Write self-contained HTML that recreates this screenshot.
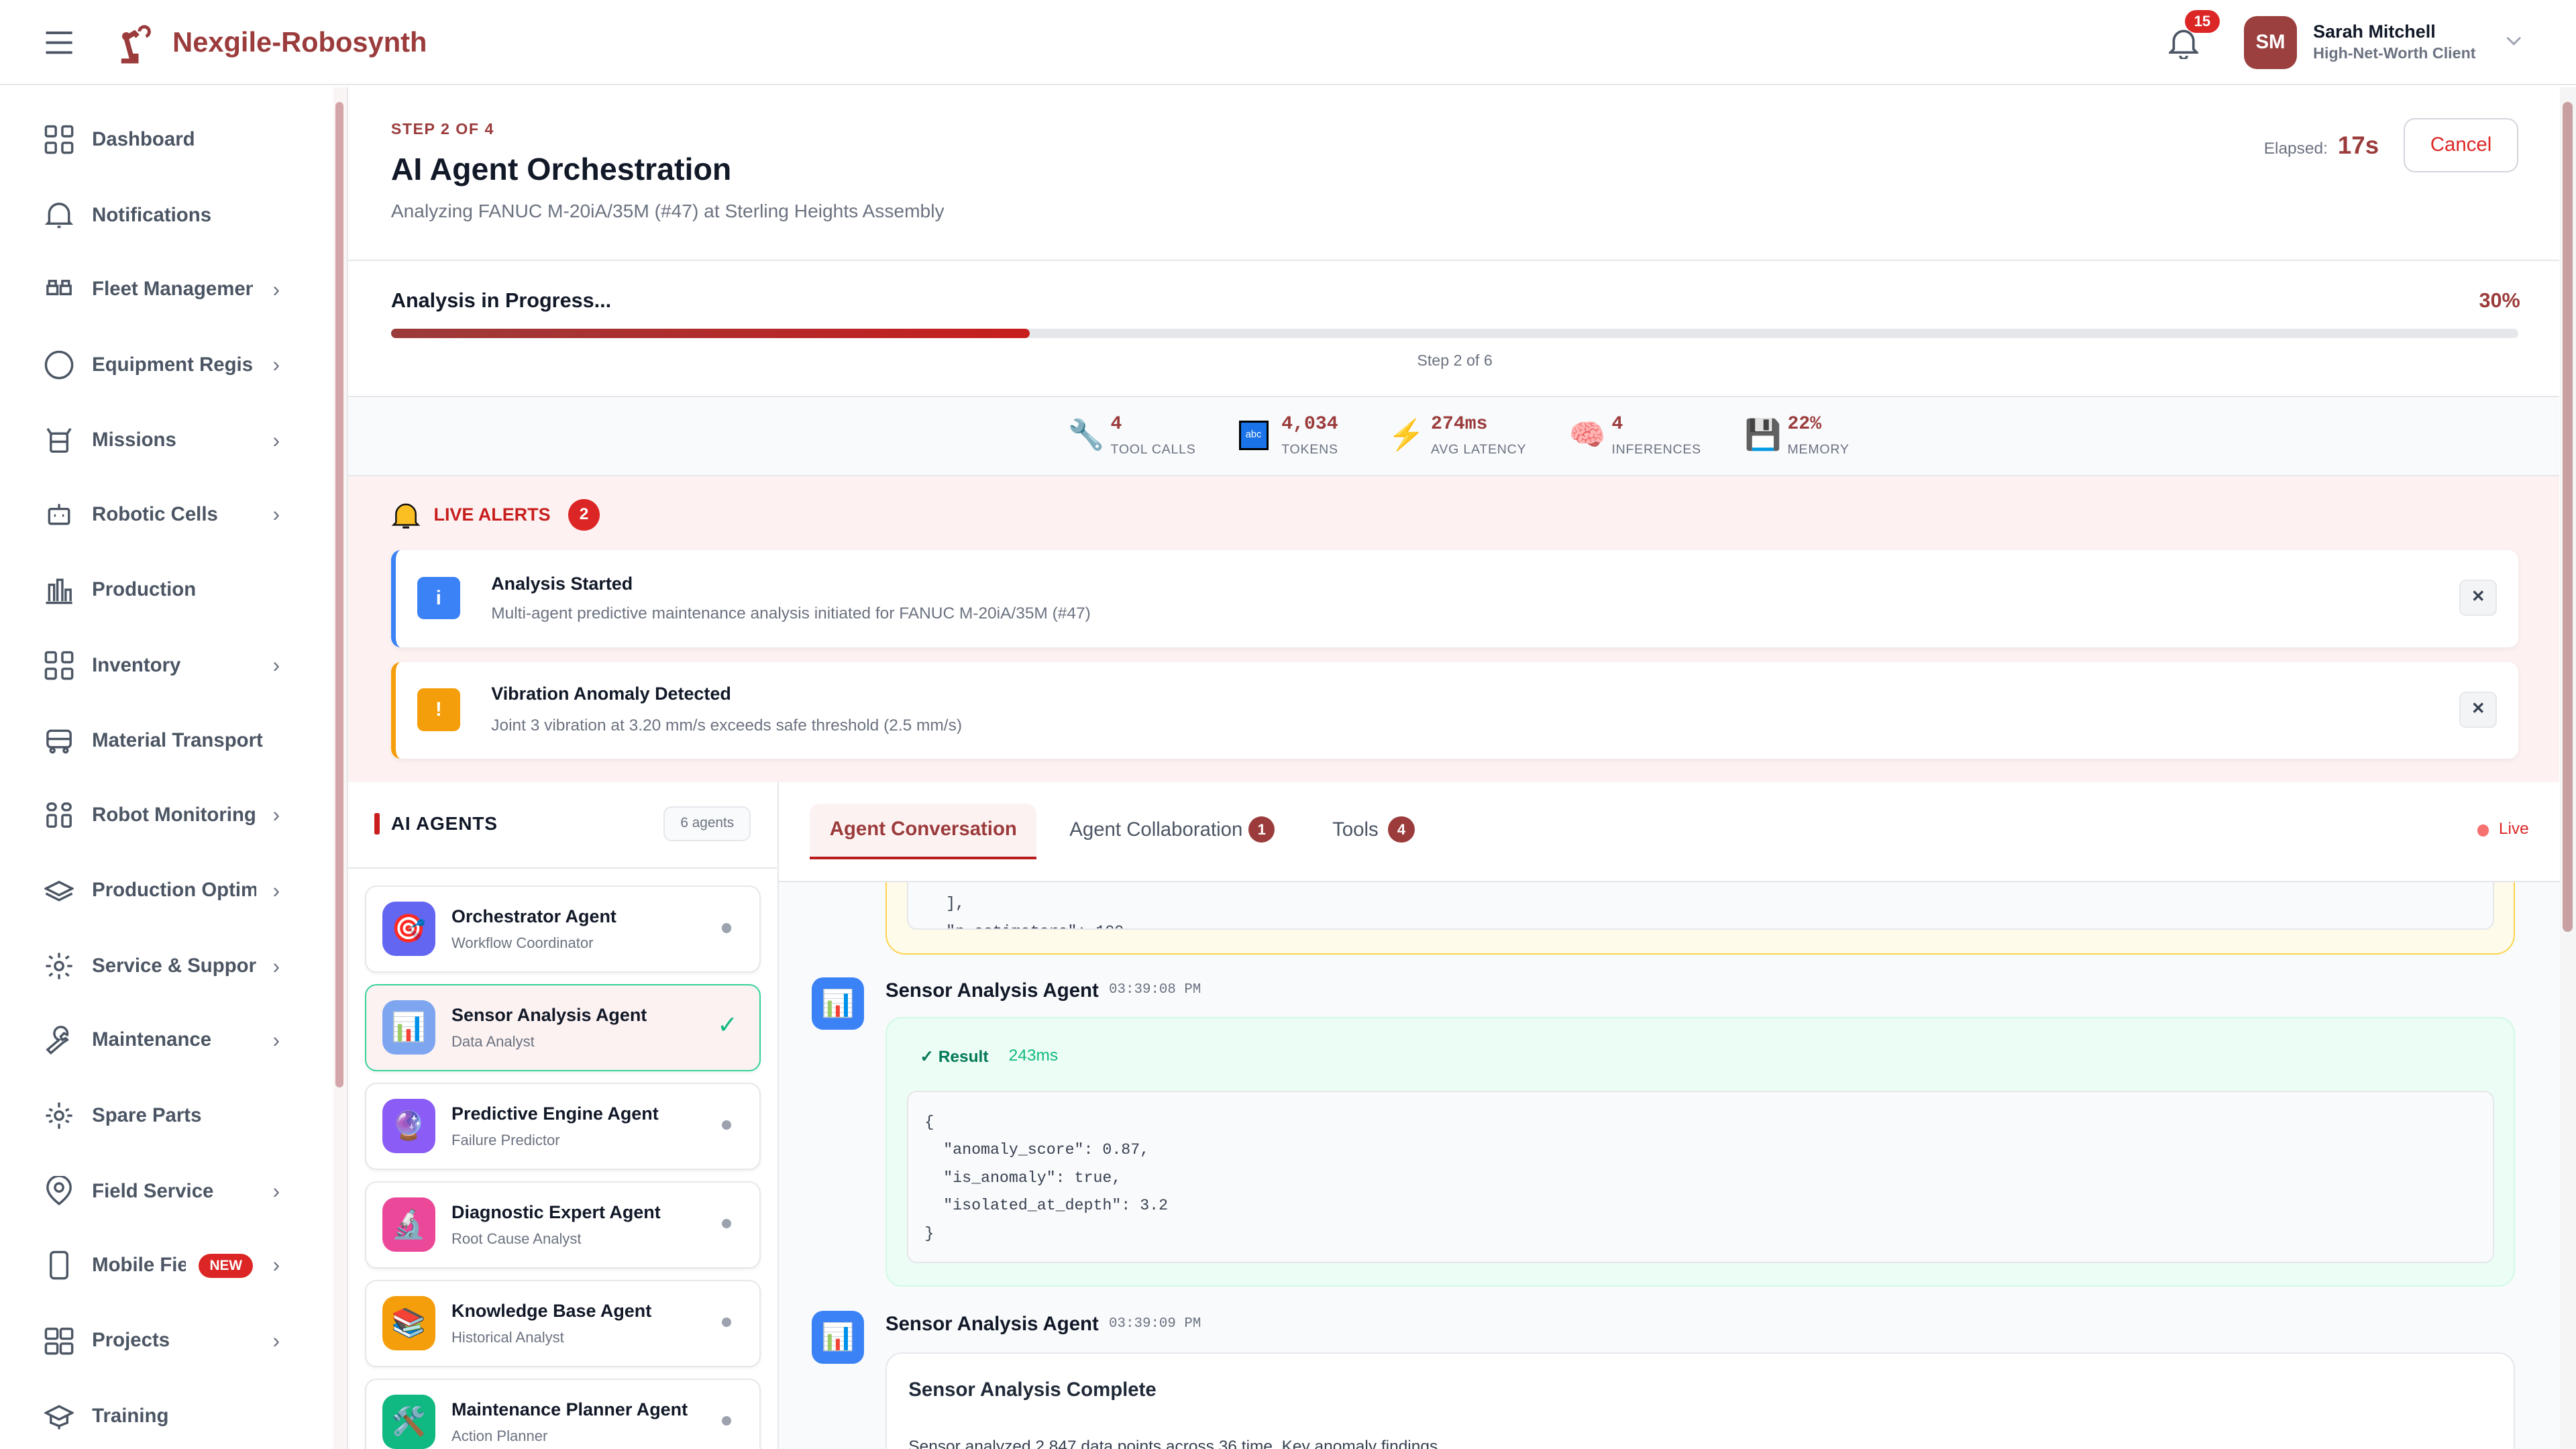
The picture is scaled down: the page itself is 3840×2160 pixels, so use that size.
<!DOCTYPE html>
<html><head><meta charset="utf-8"><style>
*{box-sizing:border-box;margin:0;padding:0}
html,body{width:3840px;height:2160px;overflow:hidden;background:#fff}
#r{zoom:2.44898;width:1568px;height:882px;position:relative;font-family:"Liberation Sans",sans-serif;color:#111827;overflow:hidden}
.a{position:absolute}
.mono{font-family:"Liberation Mono",monospace}
.nav{position:absolute;left:0;width:200px;height:30px;display:flex;align-items:center;font-size:12px;font-weight:700;color:#4b5563}
.nav svg{position:absolute;left:27px;width:18px;height:18px;fill:none;stroke:#4b5563;stroke-width:1.4}
.nav span{position:absolute;left:56px;white-space:nowrap;overflow:hidden;max-width:108px}
.nav i{position:absolute;left:166px;font-style:normal;font-weight:400;color:#6b7280;font-size:13px}
.card{position:absolute;left:222px;width:241px;height:53px;background:#fff;border:1px solid #e5e7eb;border-radius:7px;box-shadow:0 1px 2px rgba(0,0,0,.05)}
.card .ic{position:absolute;left:10px;top:9px;width:32px;height:33px;border-radius:8px;display:flex;align-items:center;justify-content:center;font-size:17px}
.card b{position:absolute;left:52px;top:12px;font-size:11px;color:#111827}
.card s{position:absolute;left:52px;top:29px;font-size:9px;color:#6b7280;text-decoration:none}
.card u{position:absolute;right:17px;top:22px;width:6px;height:6px;border-radius:50%;background:#9ca3af}
.met{position:absolute;top:252px}
.met b{position:absolute;left:26px;top:0;font-family:"Liberation Mono",monospace;font-size:11.5px;color:#9b3b3b;white-space:nowrap}
.met s{position:absolute;left:26px;top:17px;font-size:8px;color:#6b7280;text-decoration:none;letter-spacing:.3px;white-space:nowrap}
.met .e{position:absolute;left:0;top:3px;font-size:18px;line-height:20px}
</style></head><body><div id="r">

<div class="a" style="left:0;top:0;width:1568px;height:52px;background:#fff;border-bottom:1px solid #e5e7eb"></div>
<svg class="a" style="left:27px;top:18px" width="18" height="16" viewBox="0 0 18 16"><path d="M1 2h16M1 8h16M1 14h16" stroke="#4b5563" stroke-width="1.6"/></svg>
<svg class="a" style="left:70px;top:15px" width="24" height="24" viewBox="0 0 24 24"><path d="M4 22h9v-3h-3L7 8l5-3 2 2" stroke="#9b3b3b" stroke-width="3" fill="none"/><path d="M15 4a3 3 0 1 1 4 3" stroke="#9b3b3b" stroke-width="2" fill="none"/><circle cx="7" cy="7" r="2.5" fill="#9b3b3b"/></svg>
<div class="a" style="left:105px;top:16px;font-size:17px;font-weight:700;color:#9b3b3b">Nexgile-Robosynth</div>
<svg class="a" style="left:1320px;top:16px" width="18" height="20" viewBox="0 0 18 20"><path d="M3 14V9a6 6 0 0 1 12 0v5l2 2H1z M7 18a2 2 0 0 0 4 0" stroke="#4b5563" stroke-width="1.5" fill="none"/></svg>
<div class="a" style="left:1330px;top:6px;width:21px;height:14px;border-radius:7px;background:#dc2626;color:#fff;font-size:9px;font-weight:700;text-align:center;line-height:14px">15</div>
<div class="a" style="left:1366px;top:10px;width:32px;height:32px;border-radius:8px;background:#9b3f3f;color:#fff;font-size:12px;font-weight:700;text-align:center;line-height:32px">SM</div>
<div class="a" style="left:1408px;top:13px;font-size:11px;font-weight:700">Sarah Mitchell</div>
<div class="a" style="left:1408px;top:27px;font-size:9.5px;font-weight:700;color:#6b7280">High-Net-Worth Client</div>
<svg class="a" style="left:1525px;top:21px" width="10" height="8" viewBox="0 0 10 8"><path d="M1 2l4 4 4-4" stroke="#9ca3af" stroke-width="1.2" fill="none"/></svg>

<div class="a" style="left:203px;top:53px;width:8px;height:829px;background:#faf5f5"></div>
<div class="a" style="left:204px;top:62px;width:5px;height:600px;border-radius:3px;background:#d4a5a8"></div>
<div class="a" style="left:211px;top:53px;width:1px;height:829px;background:#e5e7eb"></div>

<div class="nav" style="top:70px"><svg viewBox="0 0 18 18"><rect x="1" y="1" width="6" height="6" rx="1"/><rect x="11" y="1" width="6" height="6" rx="1"/><rect x="1" y="11" width="6" height="6" rx="1"/><rect x="11" y="11" width="6" height="6" rx="1"/></svg><span>Dashboard</span></div>
<div class="nav" style="top:116px"><svg viewBox="0 0 18 18"><path d="M3 13V8a6 6 0 0 1 12 0v5l1 1H2z M8 16h2"/></svg><span>Notifications</span></div>
<div class="nav" style="top:161px"><svg viewBox="0 0 18 18"><path d="M2 7h6v5H2zM10 7h6v5h-6zM3 7V4h4v3M11 7V4h4v3"/></svg><span style="max-width:98px">Fleet Management</span><i>›</i></div>
<div class="nav" style="top:207px"><svg viewBox="0 0 18 18"><circle cx="9" cy="9" r="8"/></svg><span style="max-width:98px">Equipment Registry</span><i>›</i></div>
<div class="nav" style="top:253px"><svg viewBox="0 0 18 18"><rect x="4" y="5" width="10" height="11" rx="1"/><path d="M2 2l2 3M16 2l-2 3M4 10h10"/></svg><span>Missions</span><i>›</i></div>
<div class="nav" style="top:298px"><svg viewBox="0 0 18 18"><rect x="3" y="6" width="12" height="9" rx="1"/><path d="M9 3v3M6 10h1M11 10h1"/></svg><span>Robotic Cells</span><i>›</i></div>
<div class="nav" style="top:344px"><svg viewBox="0 0 18 18"><path d="M1 17h16M3 16V6h3v10M8 16V3h3v13M13 16V9h3v7"/></svg><span>Production</span></div>
<div class="nav" style="top:390px"><svg viewBox="0 0 18 18"><rect x="1" y="1" width="6" height="6" rx="1"/><rect x="11" y="1" width="6" height="6" rx="1"/><rect x="1" y="11" width="6" height="6" rx="1"/><rect x="11" y="11" width="6" height="6" rx="1"/></svg><span>Inventory</span><i>›</i></div>
<div class="nav" style="top:436px"><svg viewBox="0 0 18 18"><rect x="2" y="3" width="14" height="10" rx="2"/><path d="M2 8h14"/><circle cx="5" cy="15" r="1.2"/><circle cx="13" cy="15" r="1.2"/></svg><span style="max-width:120px">Material Transport</span></div>
<div class="nav" style="top:481px"><svg viewBox="0 0 18 18"><rect x="2" y="2" width="5" height="4" rx="2"/><rect x="11" y="2" width="5" height="4" rx="2"/><rect x="2" y="9" width="5" height="7" rx="1"/><rect x="11" y="9" width="5" height="7" rx="1"/></svg><span>Robot Monitoring</span><i>›</i></div>
<div class="nav" style="top:527px"><svg viewBox="0 0 18 18"><path d="M1 8l8-4 8 4-8 4zM1 11l8 4 8-4"/></svg><span style="max-width:100px">Production Optimization</span><i>›</i></div>
<div class="nav" style="top:573px"><svg viewBox="0 0 18 18"><circle cx="9" cy="9" r="2.5"/><path d="M9 1v3M9 14v3M1 9h3M14 9h3M3 3l2 1.5M15 3l-2 1.5M3 15l2-1.5M15 15l-2-1.5"/></svg><span style="max-width:100px">Service &amp; Support</span><i>›</i></div>
<div class="nav" style="top:618px"><svg viewBox="0 0 18 18"><path d="M2 15l7-6a4 4 0 1 1 5-3l-2-1-2 2 1 2 2-1 1 1-3 2-7 6z"/></svg><span>Maintenance</span><i>›</i></div>
<div class="nav" style="top:664px"><svg viewBox="0 0 18 18"><circle cx="9" cy="9" r="2.5"/><path d="M9 1v3M9 14v3M1 9h3M14 9h3M3 5l2 1M15 5l-2 1M3 13l2-1M15 13l-2-1"/></svg><span>Spare Parts</span></div>
<div class="nav" style="top:710px"><svg viewBox="0 0 18 18"><path d="M9 17C4 13 2 10 2 7a7 7 0 0 1 14 0c0 3-2 6-7 10z"/><circle cx="9" cy="7" r="2.5"/></svg><span>Field Service</span><i>›</i></div>
<div class="nav" style="top:755px"><svg viewBox="0 0 18 18"><rect x="4" y="1" width="10" height="16" rx="2"/><path d="M9 14h0"/></svg><span style="max-width:57px">Mobile Field</span><b style="position:absolute;left:121px;top:8px;width:33px;height:15px;border-radius:8px;background:#dc2626;color:#fff;font-size:8.5px;text-align:center;line-height:15px">NEW</b><i>›</i></div>
<div class="nav" style="top:801px"><svg viewBox="0 0 18 18"><rect x="1" y="2" width="7" height="6" rx="1"/><rect x="10" y="2" width="7" height="6" rx="1"/><rect x="1" y="11" width="7" height="6" rx="1"/><rect x="10" y="11" width="7" height="6" rx="1"/></svg><span>Projects</span><i>›</i></div>
<div class="nav" style="top:847px"><svg viewBox="0 0 18 18"><path d="M1 7l8-4 8 4-8 4zM4 9v4l5 2 5-2V9M9 15v2"/></svg><span>Training</span></div>

<div class="a" style="left:1558px;top:53px;width:10px;height:829px;background:#f5f5f5"></div>
<div class="a" style="left:1560px;top:62px;width:6px;height:505px;border-radius:3px;background:#c9a0a2"></div>

<div class="a" style="left:238px;top:73px;font-size:9.5px;font-weight:700;color:#9b3b3b;letter-spacing:.6px">STEP 2 OF 4</div>
<div class="a" style="left:238px;top:92px;font-size:19px;font-weight:700">AI Agent Orchestration</div>
<div class="a" style="left:238px;top:122px;font-size:11.5px;color:#6b7280">Analyzing FANUC M-20iA/35M (#47) at Sterling Heights Assembly</div>
<div class="a" style="left:1378px;top:85px;font-size:10px;color:#6b7280">Elapsed:</div>
<div class="a" style="left:1423px;top:80px;font-size:15px;font-weight:700;color:#9b3b3b">17s</div>
<div class="a" style="left:1463px;top:72px;width:70px;height:33px;border:1px solid #d1d5db;border-radius:7px;color:#dc2626;font-size:12px;text-align:center;line-height:31px">Cancel</div>
<div class="a" style="left:212px;top:158px;width:1346px;height:1px;background:#e5e7eb"></div>

<div class="a" style="left:238px;top:176px;font-size:12.5px;font-weight:700">Analysis in Progress...</div>
<div class="a" style="left:1509px;top:176px;font-size:12.5px;font-weight:700;color:#9b3b3b">30%</div>
<div class="a" style="left:238px;top:200px;width:1295px;height:6px;border-radius:3px;background:#e5e7eb"></div>
<div class="a" style="left:238px;top:200px;width:389px;height:6px;border-radius:3px;background:linear-gradient(90deg,#9b3b3b,#c81e1e)"></div>
<div class="a" style="left:238px;top:214px;width:1295px;text-align:center;font-size:9.5px;color:#6b7280">Step 2 of 6</div>

<div class="a" style="left:212px;top:241px;width:1346px;height:49px;background:#f8fafc;border-top:1px solid #e5e7eb;border-bottom:1px solid #e5e7eb"></div>
<div class="met" style="left:650px"><span class="e">🔧</span><b>4</b><s>TOOL CALLS</s></div>
<div class="met" style="left:754px"><span class="e" style="top:4px;width:18px;height:18px;background:#1a73e8;border:1.5px solid #000;color:#fff;font-size:6px;text-align:center;line-height:15px">abc</span><b>4,034</b><s>TOKENS</s></div>
<div class="met" style="left:845px"><span class="e">⚡</span><b>274ms</b><s>AVG LATENCY</s></div>
<div class="met" style="left:955px"><span class="e">🧠</span><b>4</b><s>INFERENCES</s></div>
<div class="met" style="left:1062px"><span class="e">💾</span><b>22%</b><s>MEMORY</s></div>

<div class="a" style="left:212px;top:290px;width:1346px;height:186px;background:#fdf2f1"></div>
<svg class="a" style="left:238px;top:305px" width="18" height="18" viewBox="0 0 18 18"><path d="M3 13V8a6 6 0 0 1 12 0v5l1.5 1.5h-15z" fill="#fbbf24" stroke="#111" stroke-width="1"/><path d="M7 16h4" stroke="#111" stroke-width="1.3"/></svg>
<div class="a" style="left:264px;top:307px;font-size:11px;font-weight:700;color:#c81e1e;letter-spacing:0">LIVE ALERTS</div>
<div class="a" style="left:346px;top:304px;width:19px;height:19px;border-radius:50%;background:#dc2626;color:#fff;font-size:10px;font-weight:700;text-align:center;line-height:19px">2</div>

<div class="a" style="left:238px;top:335px;width:1295px;height:59px;background:#fff;border-radius:6px;border-left:3px solid #3b82f6;box-shadow:0 1px 3px rgba(0,0,0,.06)"></div>
<div class="a" style="left:254px;top:351px;width:26px;height:26px;border-radius:4px;background:#3b82f6;color:#fff;font-size:12px;font-weight:700;text-align:center;line-height:26px">i</div>
<div class="a" style="left:299px;top:349px;font-size:11px;font-weight:700">Analysis Started</div>
<div class="a" style="left:299px;top:368px;font-size:10px;color:#6b7280">Multi-agent predictive maintenance analysis initiated for FANUC M-20iA/35M (#47)</div>
<div class="a" style="left:1497px;top:353px;width:23px;height:22px;border-radius:4px;background:#f3f4f6;border:1px solid #e5e7eb;font-size:10px;text-align:center;line-height:20px;color:#374151;font-weight:700">✕</div>

<div class="a" style="left:238px;top:403px;width:1295px;height:59px;background:#fff;border-radius:6px;border-left:3px solid #f59e0b;box-shadow:0 1px 3px rgba(0,0,0,.06)"></div>
<div class="a" style="left:254px;top:419px;width:26px;height:26px;border-radius:4px;background:#f59e0b;color:#fff;font-size:12px;font-weight:700;text-align:center;line-height:26px">!</div>
<div class="a" style="left:299px;top:416px;font-size:11px;font-weight:700">Vibration Anomaly Detected</div>
<div class="a" style="left:299px;top:436px;font-size:10px;color:#6b7280">Joint 3 vibration at 3.20 mm/s exceeds safe threshold (2.5 mm/s)</div>
<div class="a" style="left:1497px;top:421px;width:23px;height:22px;border-radius:4px;background:#f3f4f6;border:1px solid #e5e7eb;font-size:10px;text-align:center;line-height:20px;color:#374151;font-weight:700">✕</div>

<div class="a" style="left:212px;top:476px;width:262px;height:406px;background:#fff;border-right:1px solid #e5e7eb"></div>
<div class="a" style="left:228px;top:495px;width:3px;height:13px;background:#c81e1e;border-radius:1px"></div>
<div class="a" style="left:238px;top:495px;font-size:11.5px;font-weight:700;letter-spacing:.3px">AI AGENTS</div>
<div class="a" style="left:404px;top:491px;width:53px;height:21px;border:1px solid #e5e7eb;border-radius:5px;background:#f9fafb;font-size:8.5px;color:#6b7280;text-align:center;line-height:19px">6 agents</div>
<div class="a" style="left:212px;top:528px;width:261px;height:1px;background:#e5e7eb"></div>

<div class="card" style="top:539px"><div class="ic" style="background:#6366f1">🎯</div><b>Orchestrator Agent</b><s>Workflow Coordinator</s><u></u></div>
<div class="card" style="top:599px;background:#fdf2f2;border-color:#34d399"><div class="ic" style="background:#7ea6f0">📊</div><b>Sensor Analysis Agent</b><s>Data Analyst</s><span style="position:absolute;right:13px;top:15px;color:#10b981;font-size:15px">✓</span></div>
<div class="card" style="top:659px"><div class="ic" style="background:#8b5cf6">🔮</div><b>Predictive Engine Agent</b><s>Failure Predictor</s><u></u></div>
<div class="card" style="top:719px"><div class="ic" style="background:#ec4899">🔬</div><b>Diagnostic Expert Agent</b><s>Root Cause Analyst</s><u></u></div>
<div class="card" style="top:779px"><div class="ic" style="background:#f59e0b">📚</div><b>Knowledge Base Agent</b><s>Historical Analyst</s><u></u></div>
<div class="card" style="top:839px"><div class="ic" style="background:#10b981">🛠️</div><b>Maintenance Planner Agent</b><s>Action Planner</s><u></u></div>

<div class="a" style="left:474px;top:476px;width:1084px;height:61px;background:#fff;border-bottom:1px solid #e5e7eb"></div>
<div class="a" style="left:493px;top:489px;width:138px;height:34px;background:#fdf2f2;border-radius:6px 6px 0 0;border-bottom:2px solid #b91c1c;color:#9b3b3b;font-size:12px;font-weight:700;text-align:center;line-height:31px">Agent Conversation</div>
<div class="a" style="left:651px;top:498px;font-size:12px;color:#4b5563">Agent Collaboration</div>
<div class="a" style="left:760px;top:497px;width:16px;height:16px;border-radius:50%;background:#9b3b3b;color:#fff;font-size:9px;font-weight:700;text-align:center;line-height:16px">1</div>
<div class="a" style="left:811px;top:498px;font-size:12px;color:#4b5563">Tools</div>
<div class="a" style="left:845px;top:497px;width:16px;height:16px;border-radius:50%;background:#9b3b3b;color:#fff;font-size:9px;font-weight:700;text-align:center;line-height:16px">4</div>
<div class="a" style="left:1508px;top:502px;width:7px;height:7px;border-radius:50%;background:#f87171"></div>
<div class="a" style="left:1521px;top:499px;font-size:10px;color:#dc2626">Live</div>

<div class="a" style="left:474px;top:537px;width:1084px;height:345px;background:#f8fafc;overflow:hidden">
  <div class="a" style="left:65px;top:-20px;width:992px;height:64px;background:#fefbea;border:1px solid #fcd34d;border-radius:0 0 12px 12px"></div>
  <div class="a" style="left:78px;top:-10px;width:966px;height:39px;background:#f9fafb;border:1px solid #e5e7eb;border-radius:0 0 6px 6px;overflow:hidden">
    <div class="mono" style="position:absolute;left:23px;top:14px;font-size:9.5px;color:#374151;line-height:17px">],<br>"n_estimators": 100</div>
  </div>
  <div class="a" style="left:20px;top:58px;width:32px;height:32px;border-radius:7px;background:#3b82f6;display:flex;align-items:center;justify-content:center;font-size:16px">📊</div>
  <div class="a" style="left:65px;top:59px;font-size:12px;font-weight:700">Sensor Analysis Agent</div>
  <div class="a mono" style="left:201px;top:61px;font-size:8.5px;color:#6b7280">03:39:08 PM</div>
  <div class="a" style="left:65px;top:82px;width:992px;height:164px;background:#ecfdf5;border:1px solid #d1fae5;border-radius:10px"></div>
  <div class="a" style="left:86px;top:100px;font-size:10px;font-weight:700;color:#047857">✓ Result</div>
  <div class="a" style="left:140px;top:100px;font-size:10px;color:#10b981">243ms</div>
  <div class="a" style="left:78px;top:127px;width:966px;height:105px;background:#f9fafb;border:1px solid #e5e7eb;border-radius:6px">
    <div class="mono" style="position:absolute;left:10px;top:10px;font-size:9.5px;color:#374151;line-height:17px;white-space:pre">{
  "anomaly_score": 0.87,
  "is_anomaly": true,
  "isolated_at_depth": 3.2
}</div>
  </div>
  <div class="a" style="left:20px;top:261px;width:32px;height:32px;border-radius:7px;background:#3b82f6;display:flex;align-items:center;justify-content:center;font-size:16px">📊</div>
  <div class="a" style="left:65px;top:262px;font-size:12px;font-weight:700">Sensor Analysis Agent</div>
  <div class="a mono" style="left:201px;top:264px;font-size:8.5px;color:#6b7280">03:39:09 PM</div>
  <div class="a" style="left:65px;top:286px;width:992px;height:100px;background:#fff;border:1px solid #e5e7eb;border-radius:10px"></div>
  <div class="a" style="left:79px;top:302px;font-size:12px;font-weight:700;color:#1f2937">Sensor Analysis Complete</div>
  <div class="a" style="left:79px;top:338px;font-size:10px;color:#374151">Sensor analyzed 2,847 data points across 36 time. Key anomaly findings</div>
</div>
</div></body></html>
